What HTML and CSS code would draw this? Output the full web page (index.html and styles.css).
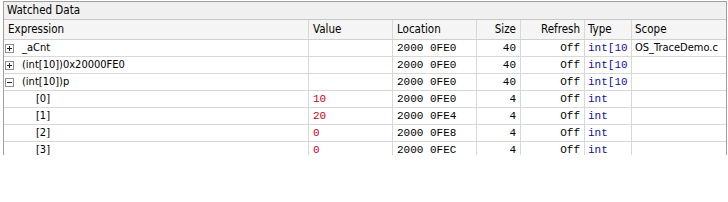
FILE: index.html
```html
<!DOCTYPE html>
<html>
<head>
<meta charset="utf-8">
<link rel="stylesheet" href="styles.css">
</head>
<body>
<div class="panel">
  <div class="title">Watched Data</div>
  <div class="row head">
    <div class="c c1">Expression</div>
    <div class="c c2">Value</div>
    <div class="c c3">Location</div>
    <div class="c c4 r">Size</div>
    <div class="c c5 r">Refresh</div>
    <div class="c c6">Type</div>
    <div class="c c7">Scope</div>
  </div>
  <div class="row">
    <div class="c c1"><svg class="tg" width="9" height="9" viewBox="0 0 9 9"><rect x="0.5" y="0.5" width="8" height="8" fill="#fff" stroke="#8f8f8f"/><path d="M2 4.5h5M4.5 2v5" stroke="#222"/></svg><span class="ex">_aCnt</span></div>
    <div class="c c2 m"></div>
    <div class="c c3 m">2000 0FE0</div>
    <div class="c c4 m r">40</div>
    <div class="c c5 m r">Off</div>
    <div class="c c6 m t">int[10</div>
    <div class="c c7">OS_TraceDemo.c</div>
  </div>
  <div class="row">
    <div class="c c1"><svg class="tg" width="9" height="9" viewBox="0 0 9 9"><rect x="0.5" y="0.5" width="8" height="8" fill="#fff" stroke="#8f8f8f"/><path d="M2 4.5h5M4.5 2v5" stroke="#222"/></svg><span class="ex">(int[10])0x20000FE0</span></div>
    <div class="c c2 m"></div>
    <div class="c c3 m">2000 0FE0</div>
    <div class="c c4 m r">40</div>
    <div class="c c5 m r">Off</div>
    <div class="c c6 m t">int[10</div>
    <div class="c c7"></div>
  </div>
  <div class="row">
    <div class="c c1"><svg class="tg" width="9" height="9" viewBox="0 0 9 9"><rect x="0.5" y="0.5" width="8" height="8" fill="#fff" stroke="#8f8f8f"/><path d="M2 4.5h5" stroke="#222"/></svg><span class="ex">(int[10])p</span></div>
    <div class="c c2 m"></div>
    <div class="c c3 m">2000 0FE0</div>
    <div class="c c4 m r">40</div>
    <div class="c c5 m r">Off</div>
    <div class="c c6 m t">int[10</div>
    <div class="c c7"></div>
  </div>
  <div class="row">
    <div class="c c1"><span class="child">[0]</span></div>
    <div class="c c2 m v">10</div>
    <div class="c c3 m">2000 0FE0</div>
    <div class="c c4 m r">4</div>
    <div class="c c5 m r">Off</div>
    <div class="c c6 m t">int</div>
    <div class="c c7"></div>
  </div>
  <div class="row">
    <div class="c c1"><span class="child">[1]</span></div>
    <div class="c c2 m v">20</div>
    <div class="c c3 m">2000 0FE4</div>
    <div class="c c4 m r">4</div>
    <div class="c c5 m r">Off</div>
    <div class="c c6 m t">int</div>
    <div class="c c7"></div>
  </div>
  <div class="row">
    <div class="c c1"><span class="child">[2]</span></div>
    <div class="c c2 m v">0</div>
    <div class="c c3 m">2000 0FE8</div>
    <div class="c c4 m r">4</div>
    <div class="c c5 m r">Off</div>
    <div class="c c6 m t">int</div>
    <div class="c c7"></div>
  </div>
  <div class="row">
    <div class="c c1"><span class="child">[3]</span></div>
    <div class="c c2 m v">0</div>
    <div class="c c3 m">2000 0FEC</div>
    <div class="c c4 m r">4</div>
    <div class="c c5 m r">Off</div>
    <div class="c c6 m t">int</div>
    <div class="c c7"></div>
  </div>
</div>
</body>
</html>
```

FILE: styles.css
```css
html, body {
  margin: 0;
  padding: 0;
  background: #fff;
}
body {
  font-family: "DejaVu Sans Condensed", "Liberation Sans", sans-serif;
  font-size: 11px;
  color: #000;
}
.panel {
  margin: 1px 0 0 3px;
  width: 722px;
  height: 153px;
  overflow: hidden;
  border-top: 1px solid #a0a0a0;
  border-left: 1px solid #a0a0a0;
  border-right: 1px solid #a0a0a0;
}
.title {
  height: 17px;
  line-height: 17px;
  padding-left: 3px;
  background: #f0f0f0;
  border-bottom: 1px solid #c8c8c8;
  font-size: 11.5px;
}
.row {
  display: grid;
  grid-template-columns: 305px 84px 84px 44px 64px 47px 94px;
  height: 16px;
  border-bottom: 1px solid #d8d8d8;
}
.row.head {
  height: 19px;
  background: #f5f5f5;
  border-bottom: 1px solid #d0d0d0;
}
.c {
  border-right: 1px solid #d8d8d8;
  overflow: hidden;
  white-space: nowrap;
  padding: 0 4px;
  line-height: 16px;
  display: flex;
  align-items: center;
}
.head .c {
  line-height: 19px;
  font-size: 11.5px;
}
.c7 {
  border-right: none;
}
.c1 {
  padding: 0 0 0 1px;
}
.head .c1 {
  padding-left: 4px;
}
.c6, .c7 {
  padding-left: 3px;
}
.r {
  justify-content: flex-end;
}
.m {
  font-family: "Liberation Mono", monospace;
  font-size: 11px;
}
.v {
  color: #c4001c;
}
.t {
  color: #10109c;
}
.tg {
  flex: none;
  display: block;
}
.ex {
  margin-left: 8px;
}
.child {
  margin-left: 31px;
}
```
